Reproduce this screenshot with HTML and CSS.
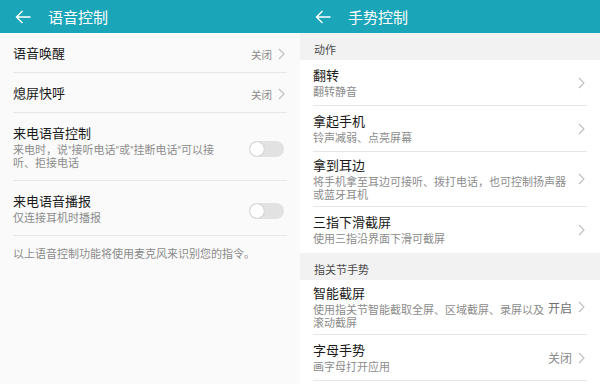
FILE: index.html
```html
<!DOCTYPE html>
<html lang="zh-CN">
<head>
    <meta charset="UTF-8">
    <meta name="viewport" content="width=device-width, initial-scale=1.0">
    <title>语音控制 / 手势控制</title>
    <link rel="stylesheet" href="styles.css">
</head>
<body>

<div class="screen screen-left">
    <div class="bar">
        <svg class="back" viewBox="0 0 16 14" width="16" height="14"><path d="M15.5 7H1.5M7.5 1L1.5 7l6 6" fill="none" stroke="#fff" stroke-width="1.4"/></svg>
        <div class="bar-title">语音控制</div>
    </div>
    <ul class="list">
        <li class="row simple">
            <div class="row-text"><div class="title">语音唤醒</div></div>
            <span class="value small">关闭</span>
            <svg class="chevron" viewBox="0 0 7 12" width="7" height="12"><path d="M1 1l5 5-5 5" fill="none" stroke="#bdbdbd" stroke-width="1.1"/></svg>
        </li>
        <li class="row simple">
            <div class="row-text"><div class="title">熄屏快呼</div></div>
            <span class="value small">关闭</span>
            <svg class="chevron" viewBox="0 0 7 12" width="7" height="12"><path d="M1 1l5 5-5 5" fill="none" stroke="#bdbdbd" stroke-width="1.1"/></svg>
        </li>
        <li class="row loose">
            <div class="row-text narrow">
                <div class="title">来电语音控制</div>
                <div class="sub">来电时，说"接听电话"或"挂断电话"可以接听、拒接电话</div>
            </div>
            <div class="switch"><span class="knob"></span></div>
        </li>
        <li class="row loose">
            <div class="row-text narrow">
                <div class="title">来电语音播报</div>
                <div class="sub">仅连接耳机时播报</div>
            </div>
            <div class="switch"><span class="knob"></span></div>
        </li>
    </ul>
    <p class="note">以上语音控制功能将使用麦克风来识别您的指令。</p>
</div>

<div class="screen screen-right">
    <div class="bar">
        <svg class="back" viewBox="0 0 16 14" width="16" height="14"><path d="M15.5 7H1.5M7.5 1L1.5 7l6 6" fill="none" stroke="#fff" stroke-width="1.4"/></svg>
        <div class="bar-title">手势控制</div>
    </div>

    <div class="section">动作</div>
    <ul class="list">
        <li class="row">
            <div class="row-text">
                <div class="title">翻转</div>
                <div class="sub">翻转静音</div>
            </div>
            <svg class="chevron" viewBox="0 0 7 12" width="7" height="12"><path d="M1 1l5 5-5 5" fill="none" stroke="#bdbdbd" stroke-width="1.1"/></svg>
        </li>
        <li class="row">
            <div class="row-text">
                <div class="title">拿起手机</div>
                <div class="sub">铃声减弱、点亮屏幕</div>
            </div>
            <svg class="chevron" viewBox="0 0 7 12" width="7" height="12"><path d="M1 1l5 5-5 5" fill="none" stroke="#bdbdbd" stroke-width="1.1"/></svg>
        </li>
        <li class="row multi">
            <div class="row-text">
                <div class="title">拿到耳边</div>
                <div class="sub">将手机拿至耳边可接听、拨打电话，也可控制扬声器或蓝牙耳机</div>
            </div>
            <svg class="chevron" viewBox="0 0 7 12" width="7" height="12"><path d="M1 1l5 5-5 5" fill="none" stroke="#bdbdbd" stroke-width="1.1"/></svg>
        </li>
        <li class="row last">
            <div class="row-text">
                <div class="title">三指下滑截屏</div>
                <div class="sub">使用三指沿界面下滑可截屏</div>
            </div>
            <svg class="chevron" viewBox="0 0 7 12" width="7" height="12"><path d="M1 1l5 5-5 5" fill="none" stroke="#bdbdbd" stroke-width="1.1"/></svg>
        </li>
    </ul>

    <div class="section">指关节手势</div>
    <ul class="list">
        <li class="row multi">
            <div class="row-text">
                <div class="title">智能截屏</div>
                <div class="sub">使用指关节智能截取全屏、区域截屏、录屏以及滚动截屏</div>
            </div>
            <span class="value on">开启</span>
            <svg class="chevron" viewBox="0 0 7 12" width="7" height="12"><path d="M1 1l5 5-5 5" fill="none" stroke="#bdbdbd" stroke-width="1.1"/></svg>
        </li>
        <li class="row">
            <div class="row-text">
                <div class="title">字母手势</div>
                <div class="sub">画字母打开应用</div>
            </div>
            <span class="value">关闭</span>
            <svg class="chevron" viewBox="0 0 7 12" width="7" height="12"><path d="M1 1l5 5-5 5" fill="none" stroke="#bdbdbd" stroke-width="1.1"/></svg>
        </li>
    </ul>
</div>

</body>
</html>
```

FILE: styles.css
```css
body, html {
    margin: 0;
    padding: 0;
    height: 100%;
}

body {
    display: flex;
    width: 600px;
    height: 384px;
    overflow: hidden;
    font-family: "Roboto", "Noto Sans CJK SC", sans-serif;
    color: #1c1c1c;
}

.screen {
    width: 300px;
    flex-shrink: 0;
    display: flex;
    flex-direction: column;
}

.screen-left {
    background-color: #fafafa;
}

.screen-right {
    background-color: #fff;
}

/* верхняя панель */
.bar {
    height: 33px;
    flex-shrink: 0;
    display: flex;
    align-items: center;
    padding-left: 15px;
    background-color: #1ba5b9;
}

.back {
    display: block;
}

.bar-title {
    margin-left: 17px;
    font-size: 15px;
    color: #fff;
}

.list {
    list-style: none;
    margin: 0 13px;
    padding: 0;
}

.row {
    display: flex;
    align-items: center;
    padding: 6px 0;
    border-bottom: 1px solid #e6e6e6;
}

.row.multi {
    padding: 4px 0;
}

.row.last {
    border-bottom: none;
    padding-bottom: 7px;
}

.row.simple {
    height: 39px;
    padding: 0;
}

.row.loose {
    padding: 11px 0 10px;
}

.row-text {
    flex: 1;
    min-width: 0;
}

.row-text.narrow {
    padding-right: 34px;
}

.title {
    font-size: 13px;
    line-height: 20px;
    color: #1a1a1a;
}

.row.simple .title {
    padding-top: 3px;
}

.sub {
    font-size: 11px;
    line-height: 13px;
    color: #8c8c8c;
}

.value {
    margin-left: 2px;
    font-size: 12px;
    color: #8a8a8a;
}

.value.on {
    color: #707070;
}

.value.small {
    font-size: 10.5px;
    padding-top: 3px;
}

.chevron {
    display: block;
    margin-left: 6px;
    margin-right: 2px;
    flex-shrink: 0;
}

.row.simple .chevron {
    margin-top: 3px;
}

.switch {
    width: 35px;
    height: 16px;
    flex-shrink: 0;
    margin-top: 4px;
    margin-right: 3px;
    border-radius: 8px;
    background-color: #e2e2e2;
    display: flex;
    align-items: center;
    padding-left: 1px;
    box-sizing: border-box;
}

.knob {
    width: 14px;
    height: 14px;
    border-radius: 50%;
    background-color: #fff;
    box-shadow: 0 0 1px rgba(0, 0, 0, 0.35);
}

.note {
    margin: 12px 13px 0;
    font-size: 11px;
    line-height: 14px;
    color: #8a8a8a;
}

.section {
    height: 27px;
    box-sizing: border-box;
    padding: 10px 0 0 14px;
    font-size: 11px;
    line-height: 15px;
    color: #4a4a4a;
    background-color: #f2f2f2;
}
```
